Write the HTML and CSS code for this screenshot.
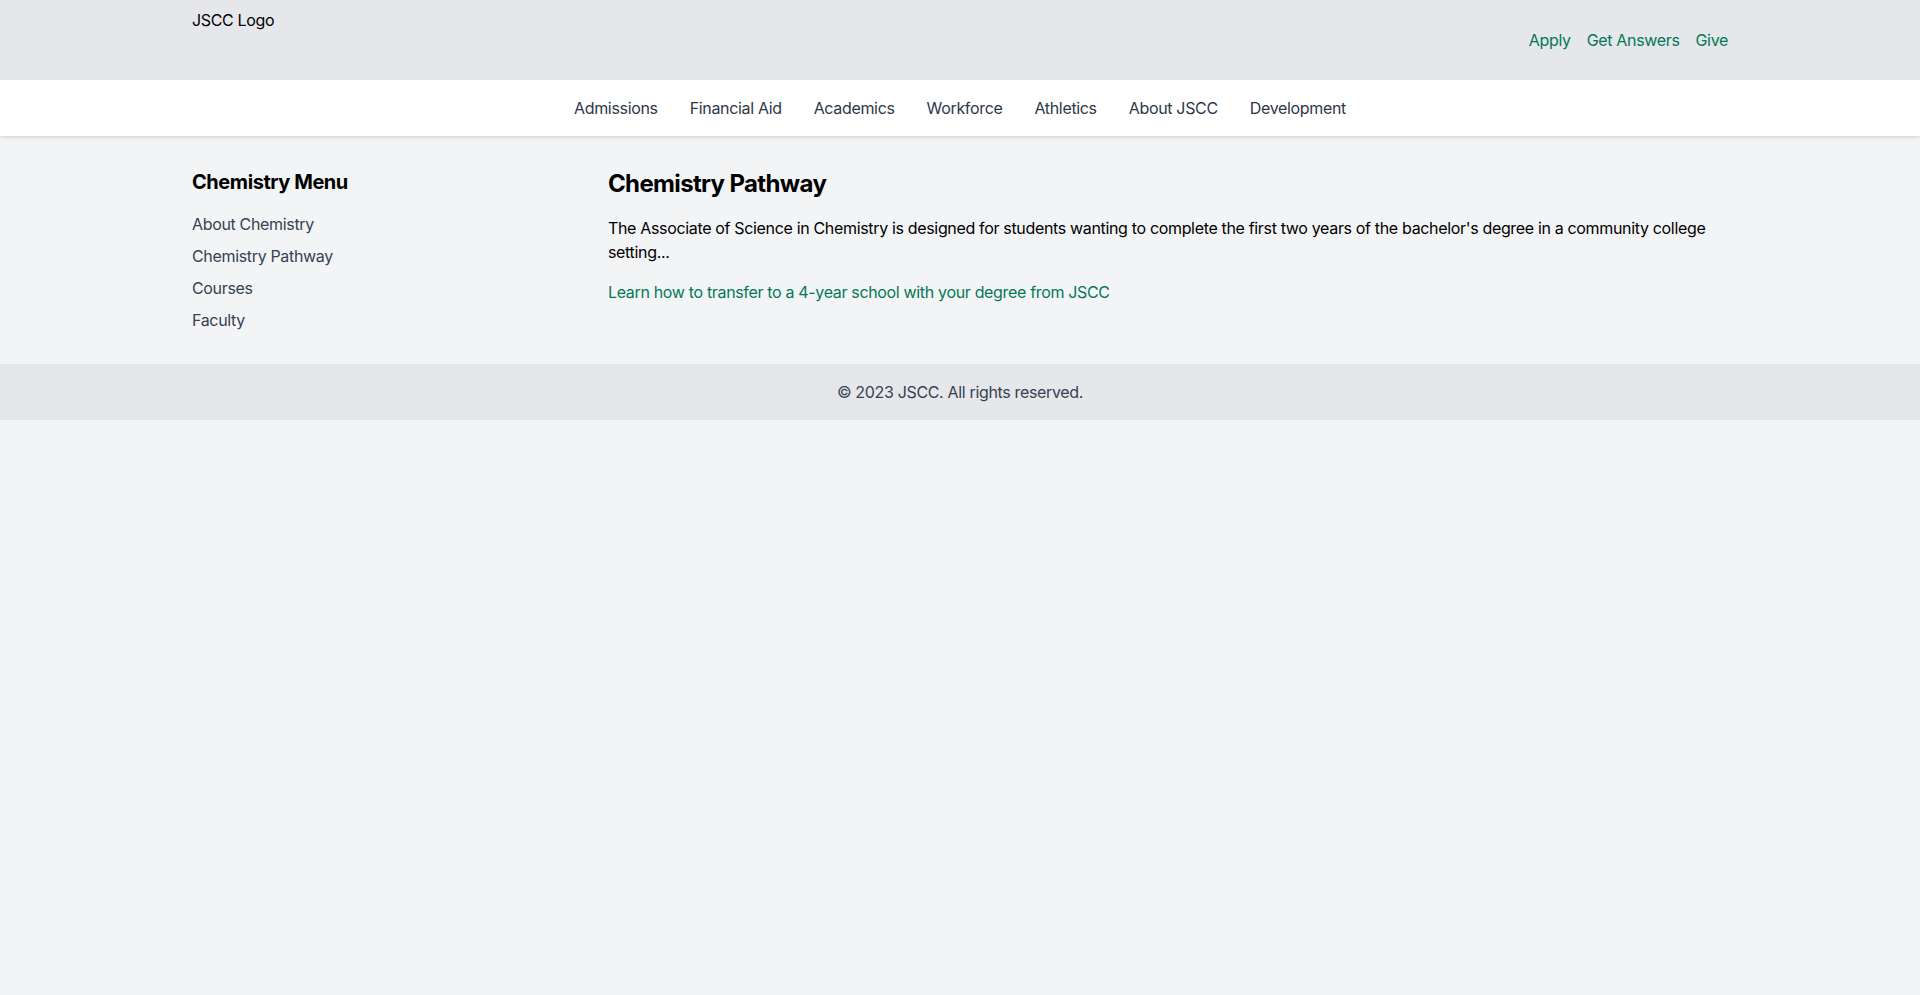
FILE: index.html
```html
<!DOCTYPE html>
<html lang="en">
<head>
<meta charset="utf-8">
<title>Chemistry Pathway - JSCC</title>
<link rel="stylesheet" href="styles.css">
</head>
<body>
<header class="topbar">
  <div class="container topbar-inner">
    <div class="logo">JSCC Logo</div>
    <nav class="utility">
      <a href="#">Apply</a>
      <a href="#">Get Answers</a>
      <a href="#">Give</a>
    </nav>
  </div>
</header>
<nav class="mainnav">
  <ul class="mainnav-list">
    <li><a href="#">Admissions</a></li>
    <li><a href="#">Financial Aid</a></li>
    <li><a href="#">Academics</a></li>
    <li><a href="#">Workforce</a></li>
    <li><a href="#">Athletics</a></li>
    <li><a href="#">About JSCC</a></li>
    <li><a href="#">Development</a></li>
  </ul>
</nav>
<main class="container content">
  <aside class="sidebar">
    <h2 class="sidebar-title">Chemistry Menu</h2>
    <ul class="sidebar-list">
      <li><a href="#">About Chemistry</a></li>
      <li><a href="#">Chemistry Pathway</a></li>
      <li><a href="#">Courses</a></li>
      <li><a href="#">Faculty</a></li>
    </ul>
  </aside>
  <section class="article">
    <h1 class="article-title">Chemistry Pathway</h1>
    <p class="article-text">The Associate of Science in Chemistry is designed for students wanting to complete the first two years of the bachelor's degree in a community college setting...</p>
    <a class="article-link" href="#">Learn how to transfer to a 4-year school with your degree from JSCC</a>
  </section>
</main>
<footer class="footer">
  <p>© 2023 JSCC. All rights reserved.</p>
</footer>
</body>
</html>
```
FILE: styles.css
```css
* { box-sizing: border-box; }
html, body { margin: 0; padding: 0; }
body {
  background: #f3f4f6;
  font-family: Inter, "Noto Sans", "Liberation Sans", sans-serif;
  font-size: 16px;
  line-height: 24px;
  letter-spacing: -0.021em;
  color: #000;
  min-height: 995px;
}
a { text-decoration: none; }
ul { list-style: none; margin: 0; padding: 0; }
h1, h2, p { margin: 0; }

.container {
  width: 1536px;
  margin: 0 auto;
}

.topbar {
  background: #e5e7eb;
  padding: 8px 0;
}
.topbar-inner {
  display: flex;
  justify-content: space-between;
  align-items: center;
  height: 64px;
}
.logo {
  align-self: stretch;
  color: #000;
}
.utility {
  display: flex;
  gap: 16px;
}
.utility a { color: #047857; }

.mainnav {
  background: #fff;
  box-shadow: 0 2px 4px rgba(0,0,0,0.08), 0 1px 2px rgba(0,0,0,0.06);
  position: relative;
}
.mainnav-list {
  display: flex;
  justify-content: center;
  padding: 16px 0;
}
.mainnav-list a {
  display: block;
  padding: 0 16px;
  color: #2d3748;
}

.content {
  display: flex;
  padding: 32px 0;
}
.sidebar {
  width: 384px;
  flex-shrink: 0;
}
.sidebar-title {
  font-size: 20px;
  line-height: 28px;
  font-weight: 700;
  letter-spacing: -0.022em;
  margin-bottom: 16px;
}
.sidebar-list {
  display: flex;
  flex-direction: column;
  gap: 8px;
}
.sidebar-list a { color: #374151; }

.article {
  flex: 1;
  margin-left: 32px;
}
.article-title {
  font-size: 24px;
  line-height: 32px;
  font-weight: 700;
  letter-spacing: -0.027em;
  margin-bottom: 16px;
}
.article-text { margin-bottom: 16px; }
.article-link { color: #047857; }

.footer {
  background: #e5e7eb;
  padding: 16px 0;
  text-align: center;
  color: #374151;
}
```
